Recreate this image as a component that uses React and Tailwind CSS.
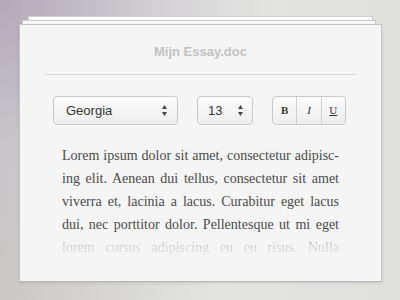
const lines = [
  'Lorem ipsum dolor sit amet, consectetur adipisc-',
  'ing elit. Aenean dui tellus, consectetur sit amet',
  'viverra et, lacinia a lacus. Curabitur eget lacus',
  'dui, nec porttitor dolor. Pellentesque ut mi eget',
]

const Arrows = () => (
  <span className="flex flex-col items-center gap-[3px] text-[#444]">
    <svg width="5" height="4" viewBox="0 0 5 4"><path d="M2.5 0L5 4H0z" fill="currentColor" /></svg>
    <svg width="5" height="4" viewBox="0 0 5 4"><path d="M0 0H5L2.5 4z" fill="currentColor" /></svg>
  </span>
)

const App = () => {
  return (
    <div className="w-[400px] h-[300px] overflow-hidden pt-4 bg-[image:radial-gradient(circle_at_0%_0%,#b3aab9_0%,rgba(200,196,204,0.5)_30%,rgba(220,220,218,0)_55%),linear-gradient(to_right,#c9c8c6_0%,#e4e4e2_55%,#e0e0dd_100%)] font-['Liberation_Sans',sans-serif]">
      <div className="ml-[28px] w-[345px] h-[4px] bg-[#fbfbfb] border border-b-0 border-[#cfcfcf]" />
      <div className="ml-[22px] w-[354px] h-[4px] bg-[#f9f9f9] border border-b-0 border-[#cacaca]" />
      <div className="ml-[19px] w-[363px] h-[258px] bg-[#f5f5f5] border border-[#c4c4c4] border-b-[#b8b8b8] shadow-[0_1px_3px_rgba(0,0,0,0.12)]">
        <div className="pt-[19px] text-center text-[13px] leading-4 font-bold text-[#c2c2c2]">Mijn Essay.doc</div>
        <div className="mx-[25px] mt-[14px] h-px bg-[#d9d9d9]" />
        <div className="flex items-center gap-[19px] ml-[33px] mt-[21px]">
          <div className="flex items-center justify-between w-[125px] h-[29px] pl-3 pr-[10px] rounded-[4px] border border-[#c9c9c9] bg-gradient-to-b from-[#fbfbfb] to-[#eeeeee] shadow-[0_1px_0_#fff] text-[13px] text-[#333]">
            <span>Georgia</span>
            <Arrows />
          </div>
          <div className="flex items-center justify-between w-[56px] h-[29px] pl-[10px] pr-[9px] rounded-[4px] border border-[#c9c9c9] bg-gradient-to-b from-[#fbfbfb] to-[#eeeeee] shadow-[0_1px_0_#fff] text-[13px] text-[#333]">
            <span>13</span>
            <Arrows />
          </div>
          <div className="flex w-[74px] h-[29px] rounded-[4px] border border-[#c9c9c9] bg-gradient-to-b from-[#fbfbfb] to-[#eeeeee] shadow-[0_1px_0_#fff] font-['Liberation_Serif',serif] text-[11px] text-[#333]">
            <span className="flex-1 flex items-center justify-center font-bold border-r border-[#d0d0d0]">B</span>
            <span className="flex-1 flex items-center justify-center italic border-r border-[#d0d0d0]">I</span>
            <span className="flex-1 flex items-center justify-center underline">U</span>
          </div>
        </div>
        <div className="ml-[42px] w-[277px] mt-[19px] font-['Liberation_Serif',serif] text-[14px] leading-[23px] text-[#4a4a4a]">
          {lines.map((l) => (
            <div key={l} className="whitespace-nowrap text-justify [text-align-last:justify]">{l}</div>
          ))}
          <div className="whitespace-nowrap text-justify [text-align-last:justify] text-transparent bg-clip-text bg-gradient-to-b from-[#b4b4b4] to-[#f0f0f0]">
            lorem cursus adipiscing eu eu risus. Nulla
          </div>
        </div>
      </div>
    </div>
  )
}

export default App
